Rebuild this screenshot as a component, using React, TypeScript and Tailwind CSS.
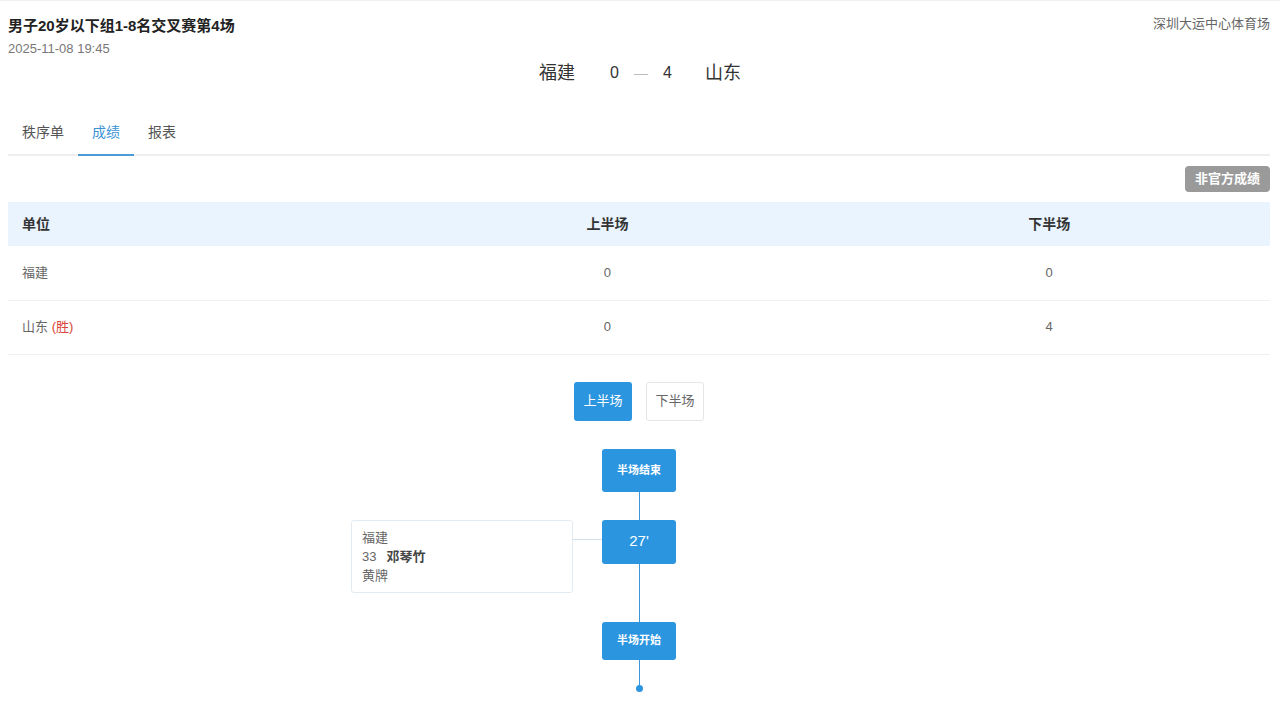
import React, { useState } from "react";

const FONT = { fontFamily: '"Liberation Sans", "Noto Sans CJK SC", sans-serif' };

type Row = { team: string; win?: boolean; first: number; second: number };

const rows: Row[] = [
  { team: "福建", first: 0, second: 0 },
  { team: "山东", win: true, first: 0, second: 4 },
];

const tabs = ["秩序单", "成绩", "报表"];

function Segment({ h }: { h: string }) {
  return <div className={`w-px bg-[#3a96d8] ${h}`} />;
}

export default function App() {
  const [tab, setTab] = useState(1);
  const [half, setHalf] = useState(0);

  return (
    <div className="min-h-[708px] bg-white border-t border-[#f1f1f1] pl-2 pr-[10px] text-[#333]" style={FONT}>
      {/* match header */}
      <div className="flex items-start justify-between pt-[14px]">
        <div>
          <div className="text-[15px] font-bold leading-[22px] text-[#222]">男子20岁以下组1-8名交叉赛第4场</div>
          <div className="text-[13px] leading-[18px] text-[#777] mt-[3px]">2025-11-08 19:45</div>
        </div>
        <div className="text-[13px] leading-[18px] text-[#666] mt-0">深圳大运中心体育场</div>
      </div>

      <div className="flex items-center justify-center mt-[2px] h-[26px] text-[#333]">
        <span className="text-[18px] w-[38px] ml-[4px]">福建</span>
        <span className="text-[16px] ml-[33px]">0</span>
        <span className="text-[#bbb] text-[14px] mx-[15px]">—</span>
        <span className="text-[16px]">4</span>
        <span className="text-[18px] ml-[33px] w-[38px]">山东</span>
      </div>

      {/* tabs */}
      <div className="flex mt-[24px] border-b-2 border-[#efefef]">
        {tabs.map((t, i) => (
          <button
            key={t}
            onClick={() => setTab(i)}
            className={`h-[46px] px-[14px] text-[14px] -mb-[2px] border-b-2 ${
              tab === i ? "text-[#3b93d6] border-[#4a9bd6]" : "text-[#555] border-transparent"
            }`}
          >
            {t}
          </button>
        ))}
      </div>

      <div className="flex justify-end mt-[10px]">
        <span className="h-[26px] px-[10px] rounded-[4px] bg-[#9a9a9a] text-white text-[13px] font-bold leading-[26px]">
          非官方成绩
        </span>
      </div>

      {/* score table */}
      <table className="w-full mt-[10px] border-collapse table-fixed">
        <colgroup>
          <col className="w-[30%]" />
          <col className="w-[35%]" />
          <col className="w-[35%]" />
        </colgroup>
        <thead>
          <tr className="bg-[#eaf4ff] h-[44px] text-[14px] font-bold text-[#333]">
            <th className="text-left pl-[14px]">单位</th>
            <th className="text-center">上半场</th>
            <th className="text-center">下半场</th>
          </tr>
        </thead>
        <tbody>
          {rows.map((r) => (
            <tr key={r.team} className="h-[54px] border-b border-[#f0f0f0] text-[13px] text-[#666]">
              <td className="pl-[14px]">
                {r.team}
                {r.win && <span className="text-[#d9443a]"> (胜)</span>}
              </td>
              <td className="text-center">{r.first}</td>
              <td className="text-center">{r.second}</td>
            </tr>
          ))}
        </tbody>
      </table>

      {/* half switch */}
      <div className="flex justify-center gap-[14px] mt-[27px]">
        {["上半场", "下半场"].map((h, i) => (
          <button
            key={h}
            onClick={() => setHalf(i)}
            className={`w-[58px] h-[39px] rounded-[3px] text-[13px] ${
              half === i ? "bg-[#2b95e0] text-white" : "bg-white text-[#666] border border-[#e6e6e6]"
            }`}
          >
            {h}
          </button>
        ))}
      </div>

      {/* timeline */}
      <div className="grid grid-cols-[1fr_74px_1fr] mt-[28px]">
        <div />
        <div className="flex flex-col items-center">
          <div className="w-[74px] h-[43px] rounded-[3px] bg-[#2b95e0] text-white text-[11px] font-bold flex items-center justify-center">
            半场结束
          </div>
          <Segment h="h-[28px]" />
        </div>
        <div />

        <div className="flex justify-end items-start">
          <div className="w-[222px] h-[73px] border border-[#e3ebf1] rounded-[3px] px-[10px] pt-[7px] text-[13px] leading-[19px] text-[#666]">
            <div>福建</div>
            <div>
              33<span className="ml-[10px] font-bold text-[#444]">邓琴竹</span>
            </div>
            <div>黄牌</div>
          </div>
          <div className="w-[29px] h-px mt-[19px] bg-[#cfe3f2]" />
        </div>
        <div className="flex flex-col items-center">
          <div className="w-[74px] h-[44px] rounded-[3px] bg-[#2b95e0] text-white text-[15px] flex items-center justify-center">
            27'
          </div>
          <Segment h="h-[58px]" />
        </div>
        <div />

        <div />
        <div className="flex flex-col items-center">
          <div className="w-[74px] h-[38px] rounded-[3px] bg-[#2b95e0] text-white text-[11px] font-bold flex items-center justify-center">
            半场开始
          </div>
          <Segment h="h-[26px]" />
          <div className="w-[7px] h-[7px] rounded-full bg-[#2b95e0] -mt-[1px]" />
        </div>
        <div />
      </div>
    </div>
  );
}
